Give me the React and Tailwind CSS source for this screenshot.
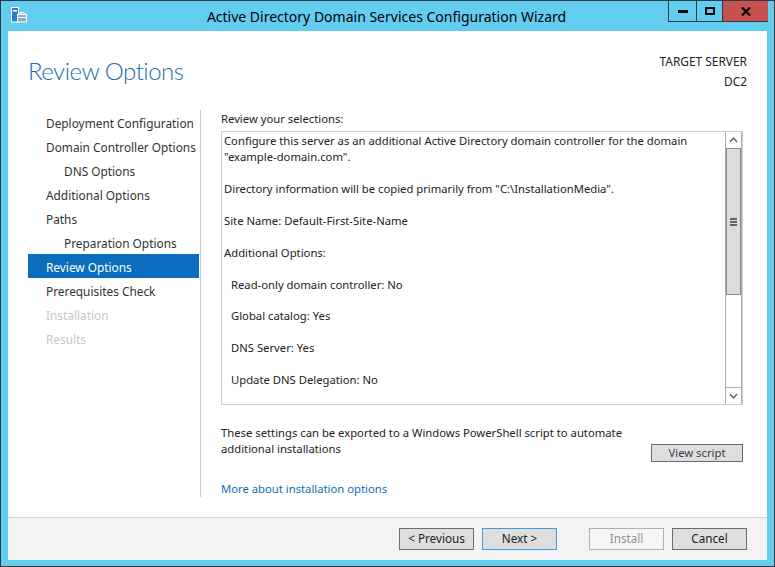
const nav = [
  ["Deployment Configuration", "n"],
  ["Domain Controller Options", "n"],
  ["DNS Options", "s"],
  ["Additional Options", "n"],
  ["Paths", "n"],
  ["Preparation Options", "s"],
  ["Review Options", "a"],
  ["Prerequisites Check", "n"],
  ["Installation", "d"],
  ["Results", "d"],
];

function AppIcon() {
  return (
    <svg width="16" height="16" viewBox="0 0 16 16" className="ml-[10px] mt-[6px]" fill="none">
      <rect x="0.5" y="0.5" width="7" height="14.5" fill="#2f7fc4" stroke="#fff" />
      <rect x="2" y="3" width="4" height="1.5" fill="#fff" />
      <rect x="6.5" y="7.5" width="9" height="7.5" fill="#8fa8c4" stroke="#fff" />
      <path d="M9 7V5.5h4V7" stroke="#fff" />
      <path d="M7 10.5h8" stroke="#fff" />
    </svg>
  );
}

function Btn({ children, disabled, def }) {
  const base = "h-[22px] w-[75px] flex items-center justify-center text-[11.7px] ";
  if (disabled) return <div className={base + "border border-[#adb2b5] bg-[#f6f6f6] text-[#8f8f8f]"}>{children}</div>;
  if (def) return <div className={base + "border border-[#3c9fe6] bg-[#dedede] text-[#222]"}>{children}</div>;
  return <div className={base + "border border-[#6c6c6c] bg-[#dedede] text-[#222]"}>{children}</div>;
}

export default function App() {
  return (
    <div className="w-[775px] h-[567px] bg-[#63cdf0] border border-[#2e3a44] flex flex-col font-['Noto_Sans',sans-serif] text-[12px] text-[#222] overflow-hidden">
      <div className="h-[30px] shrink-0 flex relative">
        <AppIcon />
        <div className="text-center text-[14px] leading-[31px] text-black absolute left-0 right-0 -translate-x-[1px]">
          Active Directory Domain Services Configuration Wizard
        </div>
        <div className="ml-auto mr-[6px] flex h-[21px] border border-t-0 border-[#2e3a44] relative z-10">
          <div className="w-[28px] flex items-center justify-center border-r border-[#2e3a44]">
            <div className="w-[10px] h-[3px] bg-black mt-[1px]" />
          </div>
          <div className="w-[25px] flex items-center justify-center">
            <div className="w-[10px] h-[8px] border-2 border-black" />
          </div>
          <div className="w-[46px] flex items-center justify-center bg-[#c75050] border-l border-[#2e3a44] -mr-px">
            <svg width="10" height="9" viewBox="0 0 10 9"><path d="M1 .5l8 8M9 .5l-8 8" stroke="#000" strokeWidth="2.2" /></svg>
          </div>
        </div>
      </div>

      <div className="mx-[7px] h-[528px] bg-white flex flex-col">
        <div className="h-[79px] shrink-0 flex justify-between pl-[20px] pr-[20px]">
          <div className="text-[24px] leading-[32px] mt-[24px] font-['Lato',sans-serif] font-light tracking-[-0.5px] text-[#1b6ea8]">Review Options</div>
          <div className="text-right mt-[20px] leading-[20px] text-[11.9px] text-[#222]">
            <div>TARGET SERVER</div>
            <div>DC2</div>
          </div>
        </div>

        <div className="flex flex-1 pb-[20px]">
          <div className="w-[193px] shrink-0 pl-[20px] pr-[1px] border-r border-[#c8c8c8] text-[11.85px]">
            {nav.map(([t, k]) => (
              <div
                key={t}
                className={
                  k === "a"
                    ? "h-[24px] pt-[1px] leading-[24px] pl-[18px] bg-[#0a6dbd] text-white"
                    : k === "s"
                    ? "h-[24px] pt-[1px] leading-[24px] pl-[36px] text-[#333]"
                    : k === "d"
                    ? "h-[24px] pt-[1px] leading-[24px] pl-[18px] text-[#c8c8c8]"
                    : "h-[24px] pt-[1px] leading-[24px] pl-[18px] text-[#333]"
                }
              >
                {t}
              </div>
            ))}
          </div>
          <div className="flex-1 pl-[20px] pr-[24px] flex flex-col text-[11.28px]">
            <div className="h-[21px] leading-[18px]">Review your selections:</div>
            <div className="h-[274px] w-[522px] border border-[#d0ccd0] flex">
              <div className="flex-1 pl-[2px] pt-[1px] leading-[16px] text-[#222]">
                <div>Configure this server as an additional Active Directory domain controller for the domain</div>
                <div>"example-domain.com".</div>
                <div className="mt-[16px]">Directory information will be copied primarily from "C:\InstallationMedia".</div>
                <div className="mt-[16px]">Site Name: Default-First-Site-Name</div>
                <div className="mt-[16px]">Additional Options:</div>
                <div className="mt-[16px] pl-[7px]">Read-only domain controller: No</div>
                <div className="mt-[15px] pl-[7px]">Global catalog: Yes</div>
                <div className="mt-[16px] pl-[7px]">DNS Server: Yes</div>
                <div className="mt-[16px] pl-[7px]">Update DNS Delegation: No</div>
              </div>
              <div className="w-[17px] shrink-0 border-x border-[#adadad] flex flex-col">
                <div className="h-[17px] flex items-center justify-center border-b border-[#8a8a8a]">
                  <svg width="9" height="6" viewBox="0 0 9 6" fill="none"><path d="M1 5l3.5-4L8 5" stroke="#555" strokeWidth="1.2" /></svg>
                </div>
                <div className="h-[146px] bg-[#dcdcdc] border-x border-b border-[#8a8a8a] flex items-center justify-center">
                  <div className="w-[7px] flex flex-col gap-px">
                    <div className="h-[2px] bg-[#666]" />
                    <div className="h-[2px] bg-[#666]" />
                    <div className="h-[2px] bg-[#666]" />
                  </div>
                </div>
                <div className="flex-1" />
                <div className="h-[17px] flex items-center justify-center border-t border-[#adadad]">
                  <svg width="9" height="6" viewBox="0 0 9 6" fill="none"><path d="M1 1l3.5 4L8 1" stroke="#555" strokeWidth="1.2" /></svg>
                </div>
              </div>
            </div>
            <div className="flex justify-between mt-[20px] h-[37px]">
              <div className="leading-[16px]">
                <div>These settings can be exported to a Windows PowerShell script to automate</div>
                <div>additional installations</div>
              </div>
              <div className="mt-[19px] h-[18px] w-[92px] border border-[#6c6c6c] bg-[#dedede] flex items-center justify-center text-[#3a3a50]">View script</div>
            </div>
            <div className="mt-[19px] leading-[16px] text-[#0a6dbd]">More about installation options</div>
          </div>
        </div>

        <div className="h-[43px] shrink-0 bg-[#f3f3f5] border-t border-[#d6d6d6] flex items-start pt-[10px] pr-[20px] justify-end">
          <Btn>&lt; Previous</Btn>
          <div className="ml-[8px]"><Btn def>Next &gt;</Btn></div>
          <div className="ml-[32px]"><Btn disabled>Install</Btn></div>
          <div className="ml-[8px]"><Btn>Cancel</Btn></div>
        </div>
      </div>
    </div>
  );
}
